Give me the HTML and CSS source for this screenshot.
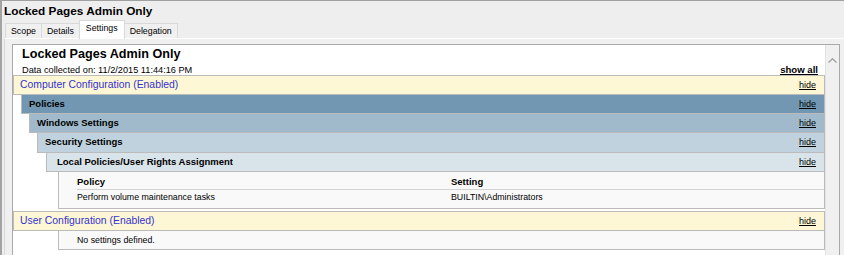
FILE: index.html
```html
<html>
<head>
    <title>Locked Pages Admin Only</title>
    <link rel="stylesheet" href="styles.css">
</head>

<body>

<div class="win-title">Locked Pages Admin Only</div>

<div class="tabs">
    <div class="tab">Scope</div>
    <div class="tab">Details</div>
    <div class="tab selected">Settings</div>
    <div class="tab">Delegation</div>
</div>

<div class="tab-panel">
    <div class="browser">
        <div class="report">

            <div class="report-title">Locked Pages Admin Only</div>
            <div class="collected">
                <span>Data collected on: 11/2/2015 11:44:16 PM</span>
                <a class="show-all">show all</a>
            </div>

            <div class="bar he0"><span>Computer Configuration (Enabled)</span><a class="hide">hide</a></div>
            <div class="bar he1h"><span>Policies</span><a class="hide">hide</a></div>
            <div class="bar he1"><span>Windows Settings</span><a class="hide">hide</a></div>
            <div class="bar he2"><span>Security Settings</span><a class="hide">hide</a></div>
            <div class="bar he3"><span>Local Policies/User Rights Assignment</span><a class="hide">hide</a></div>
            <div class="box">
                <div class="settings-row head">
                    <div>Policy</div>
                    <div>Setting</div>
                </div>
                <div class="settings-row">
                    <div>Perform volume maintenance tasks</div>
                    <div>BUILTIN\Administrators</div>
                </div>
            </div>

            <div class="bar he0 user"><span>User Configuration (Enabled)</span><a class="hide">hide</a></div>
            <div class="box empty">No settings defined.</div>

        </div>
        <div class="scrollbar">
            <svg width="9" height="5" viewBox="0 0 9 5"><polyline points="0.5,4.5 4.5,0.7 8.5,4.5" fill="none" stroke="#9e9e9e" stroke-width="1.2"/></svg>
        </div>
    </div>
</div>

</body>
</html>
```

FILE: styles.css
```css
body {
    margin: 0px;
    height: 254px;
    overflow: hidden;
    background: #eeeeee;
    border-top: 1px solid #a0a0a0;
    border-left: 2px solid #a3a3a3;
    font-family: "Liberation Sans", Arial, sans-serif;
    color: #000000;
}

.win-title {
    height: 19px;
    line-height: 20px;
    padding-left: 2px;
    font-size: 11.8px;
    font-weight: bold;
}

/* tab strip */

.tabs {
    display: flex;
    align-items: flex-end;
    height: 18px;
    padding-left: 3px;
}

.tab {
    position: relative;
    box-sizing: border-box;
    height: 15px;
    line-height: 14px;
    padding: 0px 5px;
    margin-left: -1px;
    border: 1px solid #d9d9d9;
    border-bottom: none;
    background: #f0f0f0;
    font-size: 8.8px;
}

.tab:first-child {
    margin-left: 0px;
}

.tab.selected {
    z-index: 1;
    height: 19px;
    line-height: 15px;
    padding: 0px 6px;
    margin-bottom: -1px;
    background: #ffffff;
}

.tab-panel {
    margin-left: 2px;
    padding: 5px 0px 0px 7px;
    border-top: 1px solid #ffffff;
    border-left: 1px solid #d9d9d9;
    background: #f0f0f0;
}

/* embedded report */

.browser {
    display: flex;
    box-sizing: border-box;
    width: 828px;
    height: 212px;
    border: 1px solid #a9a9a9;
    border-bottom: none;
    background: #ffffff;
}

.report {
    flex: none;
    width: 812px;
    overflow: hidden;
}

.scrollbar {
    flex: none;
    width: 13px;
    padding-top: 13px;
    border-left: 1px solid #e2e2e2;
    background: #f0f0f0;
}

.scrollbar svg {
    display: block;
    margin-left: 2px;
}

.report-title {
    padding: 1px 0px 0px 9px;
    line-height: 16px;
    font-size: 12.6px;
    font-weight: bold;
}

.collected {
    display: flex;
    justify-content: space-between;
    height: 13px;
    line-height: 16px;
    padding: 0px 7px 0px 9px;
    font-size: 9.2px;
}

.show-all {
    font-size: 9.6px;
    font-weight: bold;
    text-decoration: underline;
}

.bar {
    display: flex;
    justify-content: space-between;
    box-sizing: border-box;
    height: 20.2px;
    line-height: 18px;
    margin-bottom: -1px;
    padding: 0px 8px 0px 7px;
    border: 1px solid #bbbbbb;
    font-size: 9.5px;
    font-weight: bold;
}

.hide {
    font-size: 9px;
    font-weight: normal;
    text-decoration: underline;
}

.he0 {
    height: 20px;
    padding-left: 6px;
    background: #fef7d6;
    color: #3333cc;
    font-size: 10.4px;
    font-weight: normal;
}

.he0 .hide {
    color: #000000;
}

.he0.user {
    margin-top: 2px;
}

.he1h {
    margin-left: 8px;
    background: #7197b3;
}

.he1 {
    margin-left: 16px;
    background: #a0bacb;
}

.he2 {
    margin-left: 24px;
    background: #c0d2de;
}

.he3 {
    margin-left: 33px;
    padding-left: 10px;
    background: #d9e3ea;
}

.box {
    margin-left: 45px;
    padding-left: 18px;
    border: 1px solid #bbbbbb;
    background: #f9f9f9;
    font-size: 8.8px;
}

.settings-row {
    display: grid;
    grid-template-columns: 374px 1fr;
    height: 18px;
    line-height: 15px;
}

.settings-row.head {
    height: 14px;
    line-height: 14px;
    padding-top: 3px;
    border-bottom: 1px solid #d3d3d3;
    font-size: 9.5px;
    font-weight: bold;
}

.box.empty {
    margin-top: -1px;
    height: 18px;
    line-height: 18px;
}
```
